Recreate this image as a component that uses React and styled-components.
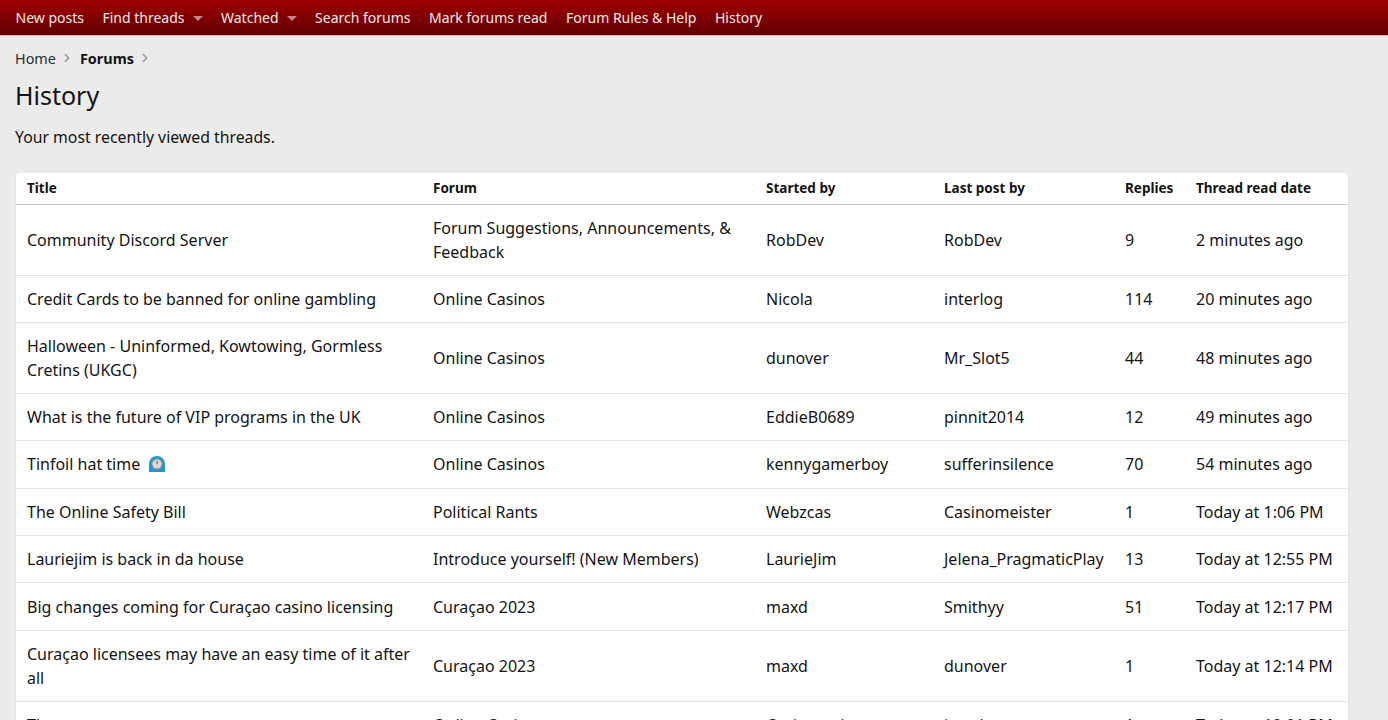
import styled, { createGlobalStyle } from 'styled-components'
import { ChevronRight } from 'lucide-react'

const Global = createGlobalStyle`
  html, body { margin: 0; padding: 0; background: #ebebeb; overflow: hidden; height: 720px; }
  body { font-family: "Noto Sans", "Open Sans", sans-serif; font-size: 16px; color: #141414; }
  * { box-sizing: border-box; }
`

const NavBar = styled.nav`
  height: 36px;
  display: flex;
  align-items: center;
  padding-left: 6.5px;
  background: linear-gradient(to bottom, #a00000, #5f0000);
  border-bottom: 1px solid #e8b0b0;
`

const NavItem = styled.a`
  color: #f5e8e8;
  font-size: 14px;
  padding: 0 9.5px 0 9px;
  display: flex;
  align-items: center;
  gap: 8px;
`

const Caret = styled.span`
  width: 0;
  height: 0;
  border-left: 5px solid transparent;
  border-right: 5px solid transparent;
  border-top: 5px solid #c98585;
  margin-top: 2px;
`

const Main = styled.main`
  padding: 13px 39px 0 15px;
`

const Crumbs = styled.div`
  display: flex;
  align-items: center;
  gap: 4px;
  height: 18px;
  font-size: 14.4px;
  color: #2c2c2c;
`

const CrumbBold = styled.b`
  font-weight: 700;
  color: #141414;
  margin-left: 2px;
`

const CrumbArrow = styled(ChevronRight)`
  color: #8a8a8a;
  flex: none;
`

const Title = styled.h1`
  margin: 10px 0 0;
  font-size: 25px;
  line-height: 36px;
  font-weight: 400;
`

const Intro = styled.p`
  margin: 13px 0 0;
  font-size: 15.8px;
  line-height: 22px;
`

const Card = styled.div`
  margin-top: 24px;
  background: #fff;
  border-radius: 4px;
  border: 1px solid #e2e2e2;
  border-top-color: #ececec;
`

const Table = styled.table`
  width: 100%;
  border-collapse: collapse;
  table-layout: fixed;
`

const Head = styled.th`
  text-align: left;
  font-size: 13.5px;
  font-weight: 700;
  height: 31px;
  padding: 0 11px;
  border-bottom: 1px solid #c8c6c8;
  width: ${p => p.$w}px;
`

const Cell = styled.td`
  padding: 11px;
  font-size: 16px;
  line-height: 24px;
  vertical-align: middle;
  border-bottom: 1px solid #e4e4e4;
`

const Row = styled.tr`
  height: 47.4px;
`

const HatSvg = styled.svg`
  width: 18px;
  height: 18px;
  vertical-align: -3px;
  margin-left: 8px;
`

// small clock-in-a-dome emoji that sits behind "Tinfoil hat time"
const HatIcon = () => (
  <HatSvg viewBox="0 0 18 18">
    <path d="M1 17V9a8 8 0 0 1 16 0v8z" fill="#1a9ad0" />
    <circle cx="9" cy="9" r="6" fill="#7f8a90" />
    <circle cx="9" cy="9" r="4.6" fill="#d8d8d6" />
    <path d="M9 6v3" stroke="#666" strokeWidth="1.2" />
  </HatSvg>
)

const columns = [
  ['Title', 406],
  ['Forum', 333],
  ['Started by', 178],
  ['Last post by', 181],
  ['Replies', 71],
  ['Thread read date', 163],
]

const rows = [
  ['Community Discord Server', 'Forum Suggestions, Announcements, & Feedback', 'RobDev', 'RobDev', '9', '2 minutes ago'],
  ['Credit Cards to be banned for online gambling', 'Online Casinos', 'Nicola', 'interlog', '114', '20 minutes ago'],
  ['Halloween - Uninformed, Kowtowing, Gormless Cretins (UKGC)', 'Online Casinos', 'dunover', 'Mr_Slot5', '44', '48 minutes ago'],
  ['What is the future of VIP programs in the UK', 'Online Casinos', 'EddieB0689', 'pinnit2014', '12', '49 minutes ago'],
  ['Tinfoil hat time', 'Online Casinos', 'kennygamerboy', 'sufferinsilence', '70', '54 minutes ago'],
  ['The Online Safety Bill', 'Political Rants', 'Webzcas', 'Casinomeister', '1', 'Today at 1:06 PM'],
  ['Lauriejim is back in da house', 'Introduce yourself! (New Members)', 'LaurieJim', 'Jelena_PragmaticPlay', '13', 'Today at 12:55 PM'],
  ['Big changes coming for Curaçao casino licensing', 'Curaçao 2023', 'maxd', 'Smithyy', '51', 'Today at 12:17 PM'],
  ['Curaçao licensees may have an easy time of it after all', 'Curaçao 2023', 'maxd', 'dunover', '1', 'Today at 12:14 PM'],
  // only the top pixels of this row are on screen
  ['The', 'Online Casinos', 'Casinomeister', 'interlog', '1', 'Today at 12:01 PM'],
]

export default function App() {
  return (
    <>
      <Global />
      <NavBar>
        <NavItem>New posts</NavItem>
        <NavItem>Find threads<Caret /></NavItem>
        <NavItem>Watched<Caret /></NavItem>
        <NavItem>Search forums</NavItem>
        <NavItem>Mark forums read</NavItem>
        <NavItem>Forum Rules &amp; Help</NavItem>
        <NavItem>History</NavItem>
      </NavBar>
      <Main>
        <Crumbs>
          Home <CrumbArrow size={14} /> <CrumbBold>Forums</CrumbBold> <CrumbArrow size={14} />
        </Crumbs>
        <Title>History</Title>
        <Intro>Your most recently viewed threads.</Intro>
        <Card>
          <Table>
            <thead>
              <tr>
                {columns.map(([name, w]) => <Head key={name} $w={w}>{name}</Head>)}
              </tr>
            </thead>
            <tbody>
              {rows.map(row => (
                <Row key={row[0]}>
                  {row.map((text, i) => (
                    <Cell key={i}>
                      {text}
                      {text === 'Tinfoil hat time' && <HatIcon />}
                    </Cell>
                  ))}
                </Row>
              ))}
            </tbody>
          </Table>
        </Card>
      </Main>
    </>
  )
}
